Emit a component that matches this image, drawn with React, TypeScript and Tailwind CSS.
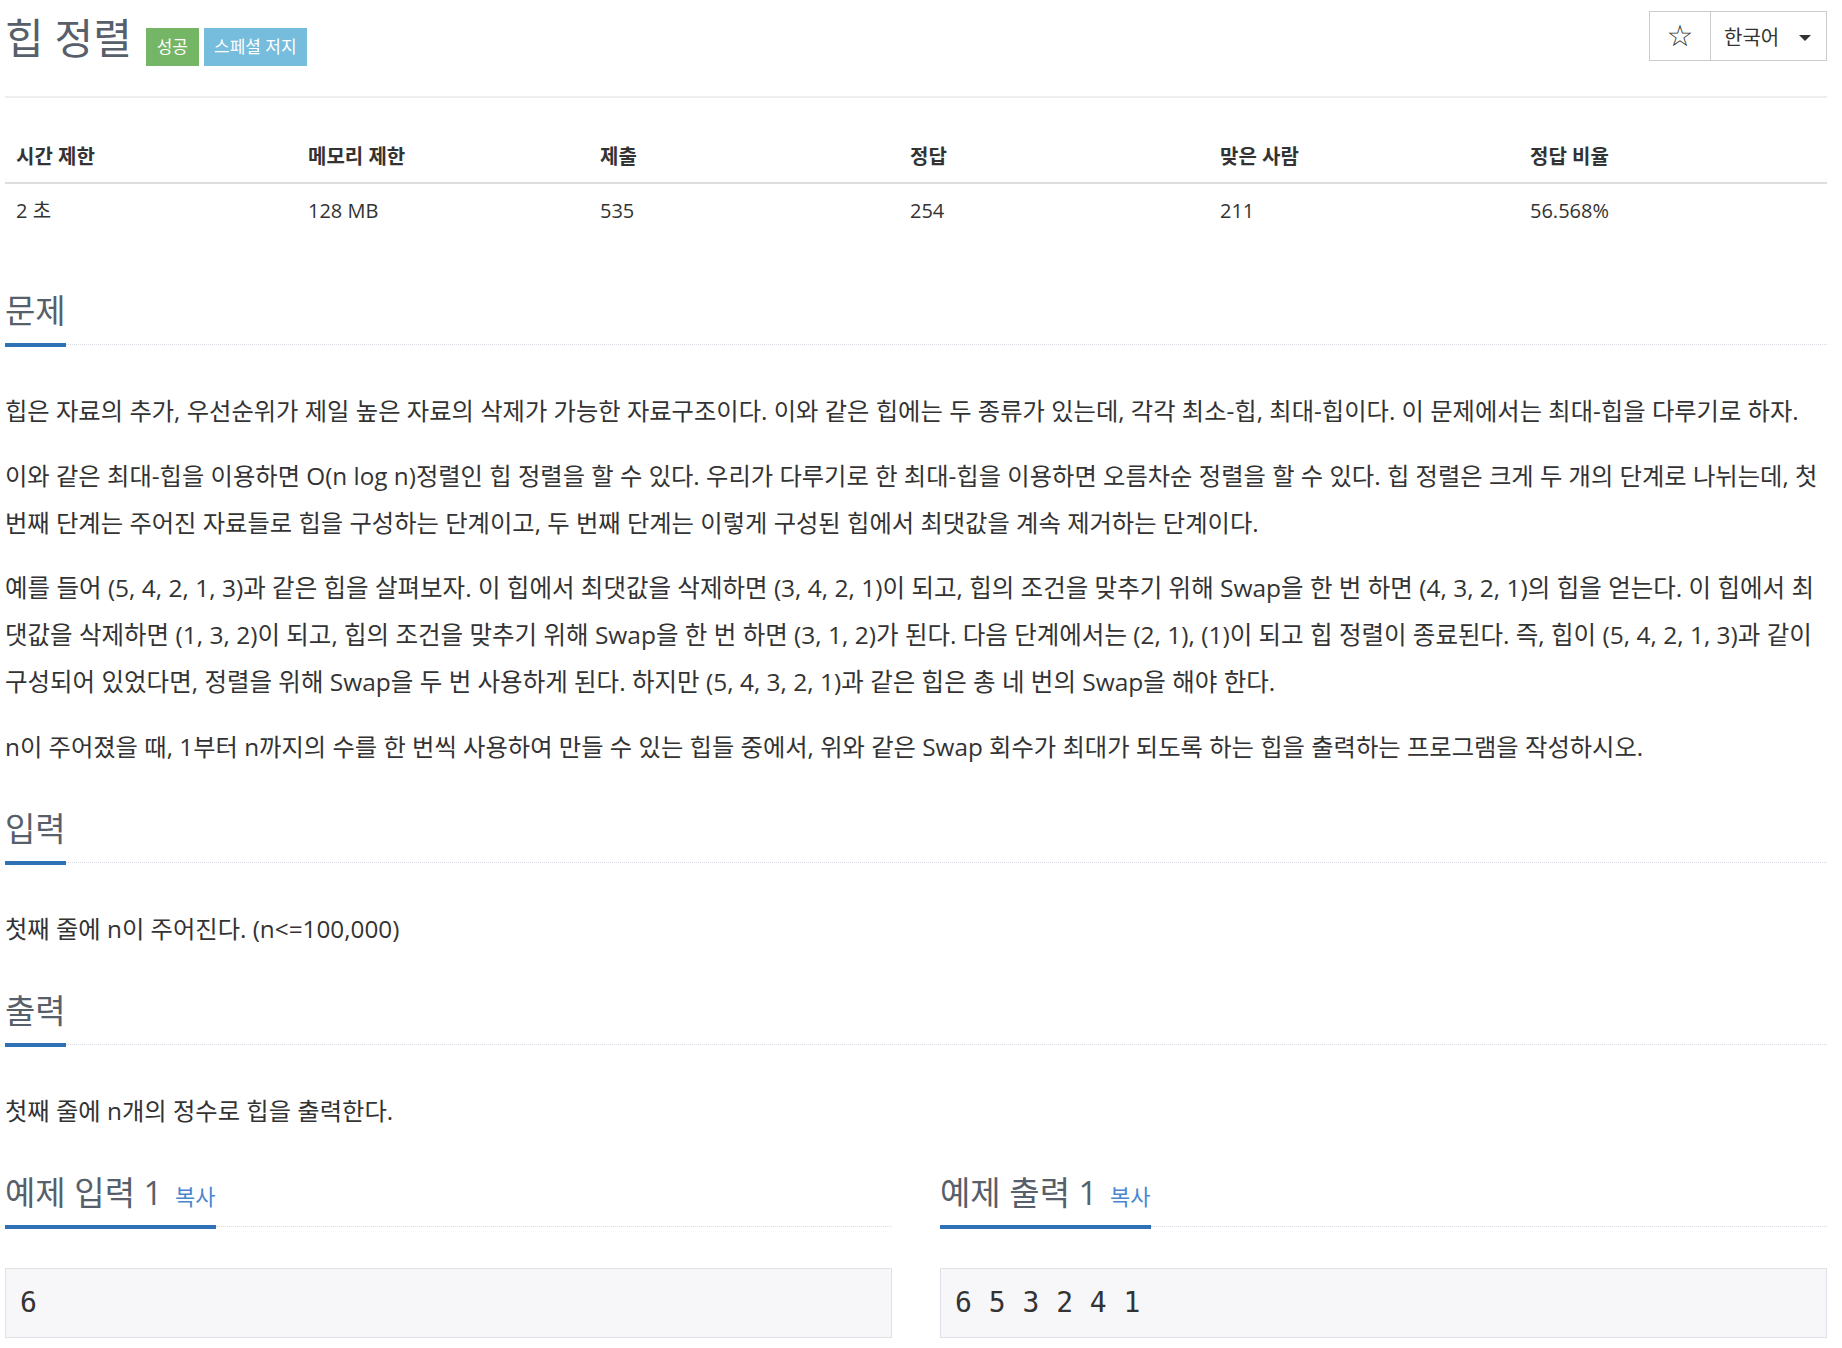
import { ReactNode } from "react";

const sans = "font-['Open_Sans','Noto_Sans_CJK_KR',sans-serif]";

function SectionTitle({ children }: { children: ReactNode }) {
    return (
        <div className="flex items-end">
            <div className="flex flex-col">
                <h2 className="h-[40px] text-[33px] leading-[40px] text-[#575f6b] whitespace-nowrap">
                    {children}
                </h2>
                <div className="mt-[12px] h-[4px] bg-[#2f71b7]" />
            </div>
            <div className="mb-[1px] h-[2px] flex-1 border-t border-dotted border-[#d8dce2]" />
        </div>
    );
}

function Section({
    title,
    className,
    children,
}: {
    title: ReactNode;
    className?: string;
    children: ReactNode;
}) {
    return (
        <section className={className}>
            <SectionTitle>{title}</SectionTitle>
            <div className="mt-[40px] flex flex-col gap-[18px] text-[24.3px] leading-[47px] text-[#333]">
                {children}
            </div>
        </section>
    );
}

function Sample({ title, value }: { title: string; value: string }) {
    return (
        <div className="flex flex-col">
            <SectionTitle>
                {title}{" "}
                <span className="ml-[4px] text-[22px] text-[#4a86cf]">복사</span>
            </SectionTitle>
            <pre className="mt-[39px] h-[70px] border border-[#e1e1e8] bg-[#f7f7f9] px-[14px] font-['DejaVu_Sans_Mono',monospace] text-[28px] leading-[68px] text-[#333]">
                {value}
            </pre>
        </div>
    );
}

export default function App() {
    const stats = [
        ["시간 제한", "2 초"],
        ["메모리 제한", "128 MB"],
        ["제출", "535"],
        ["정답", "254"],
        ["맞은 사람", "211"],
        ["정답 비율", "56.568%"],
    ];

    return (
        <div className={`${sans} [font-feature-settings:'palt'] bg-white pl-[5px] pr-[15px] pb-[10px]`}>
            <div className="flex h-[96px] items-start justify-between">
                <div className="flex items-start">
                    <h1 className="mt-[13px] h-[50px] text-[42px] leading-[50px] text-[#575f6b]">
                        힙 정렬
                    </h1>
                    <span className="ml-[14px] mt-[28px] h-[38px] w-[53px] bg-[#74b566] text-center text-[17px] leading-[38px] text-white">
                        성공
                    </span>
                    <span className="ml-[5px] mt-[28px] h-[38px] w-[103px] bg-[#76bcdc] text-center text-[17px] leading-[38px] text-white">
                        스페셜 저지
                    </span>
                </div>
                <div className="mt-[11px] flex h-[50px] border border-[#ccc] text-[#333]">
                    <div className="flex w-[61px] items-center justify-center border-r border-[#ccc] font-['DejaVu_Sans',sans-serif] text-[30px] leading-none">
                        ☆
                    </div>
                    <div className="flex w-[115px] items-center gap-[20px] pl-[13px] pt-[3px] text-[20px]">
                        <span>한국어</span>
                        <span className="h-0 w-0 border-x-[6px] border-t-[6px] border-x-transparent border-t-[#333]" />
                    </div>
                </div>
            </div>
            <div className="h-[2px] bg-[#eee]" />

            <div className="mt-[34px] grid grid-cols-[292px_292px_310px_310px_310px_1fr] text-[20px] text-[#333]">
                {stats.map(([h]) => (
                    <div key={h} className="h-[52px] border-b-2 border-[#ddd] pl-[11px] font-bold leading-[50px]">
                        {h}
                    </div>
                ))}
                {stats.map(([h, v]) => (
                    <div key={h + v} className="h-[52px] pl-[11px] leading-[54px]">
                        {v}
                    </div>
                ))}
            </div>

            <Section title="문제" className="mt-[55px]">
                <p>
                    힙은 자료의 추가, 우선순위가 제일 높은 자료의 삭제가 가능한 자료구조이다. 이와 같은 힙에는 두 종류가 있는데, 각각 최소-힙, 최대-힙이다. 이 문제에서는 최대-힙을 다루기로 하자.
                </p>
                <p>
                    이와 같은 최대-힙을 이용하면 O(n log n)정렬인 힙 정렬을 할 수 있다. 우리가 다루기로 한 최대-힙을 이용하면 오름차순 정렬을 할 수 있다. 힙 정렬은 크게 두 개의 단계로 나뉘는데, 첫 번째 단계는 주어진 자료들로 힙을 구성하는 단계이고, 두 번째 단계는 이렇게 구성된 힙에서 최댓값을 계속 제거하는 단계이다.
                </p>
                <p className="text-[24.5px]">
                    예를 들어 (5, 4, 2, 1, 3)과 같은 힙을 살펴보자. 이 힙에서 최댓값을 삭제하면 (3, 4, 2, 1)이 되고, 힙의 조건을 맞추기 위해 Swap을 한 번 하면 (4, 3, 2, 1)의 힙을 얻는다. 이 힙에서 최댓값을 삭제하면 (1, 3, 2)이 되고, 힙의 조건을 맞추기 위해 Swap을 한 번 하면 (3, 1, 2)가 된다. 다음 단계에서는 (2, 1), (1)이 되고 힙 정렬이 종료된다. 즉, 힙이 (5, 4, 2, 1, 3)과 같이 구성되어 있었다면, 정렬을 위해 Swap을 두 번 사용하게 된다. 하지만 (5, 4, 3, 2, 1)과 같은 힙은 총 네 번의 Swap을 해야 한다.
                </p>
                <p>
                    n이 주어졌을 때, 1부터 n까지의 수를 한 번씩 사용하여 만들 수 있는 힙들 중에서, 위와 같은 Swap 회수가 최대가 되도록 하는 힙을 출력하는 프로그램을 작성하시오.
                </p>
            </Section>

            <Section title="입력" className="mt-[39px]">
                <p>첫째 줄에 n이 주어진다. (n&lt;=100,000)</p>
            </Section>

            <Section title="출력" className="mt-[39px]">
                <p>첫째 줄에 n개의 정수로 힙을 출력한다.</p>
            </Section>

            <div className="mt-[39px] grid grid-cols-2 gap-[48px]">
                <Sample title="예제 입력 1" value="6" />
                <Sample title="예제 출력 1" value="6 5 3 2 4 1" />
            </div>
        </div>
    );
}
